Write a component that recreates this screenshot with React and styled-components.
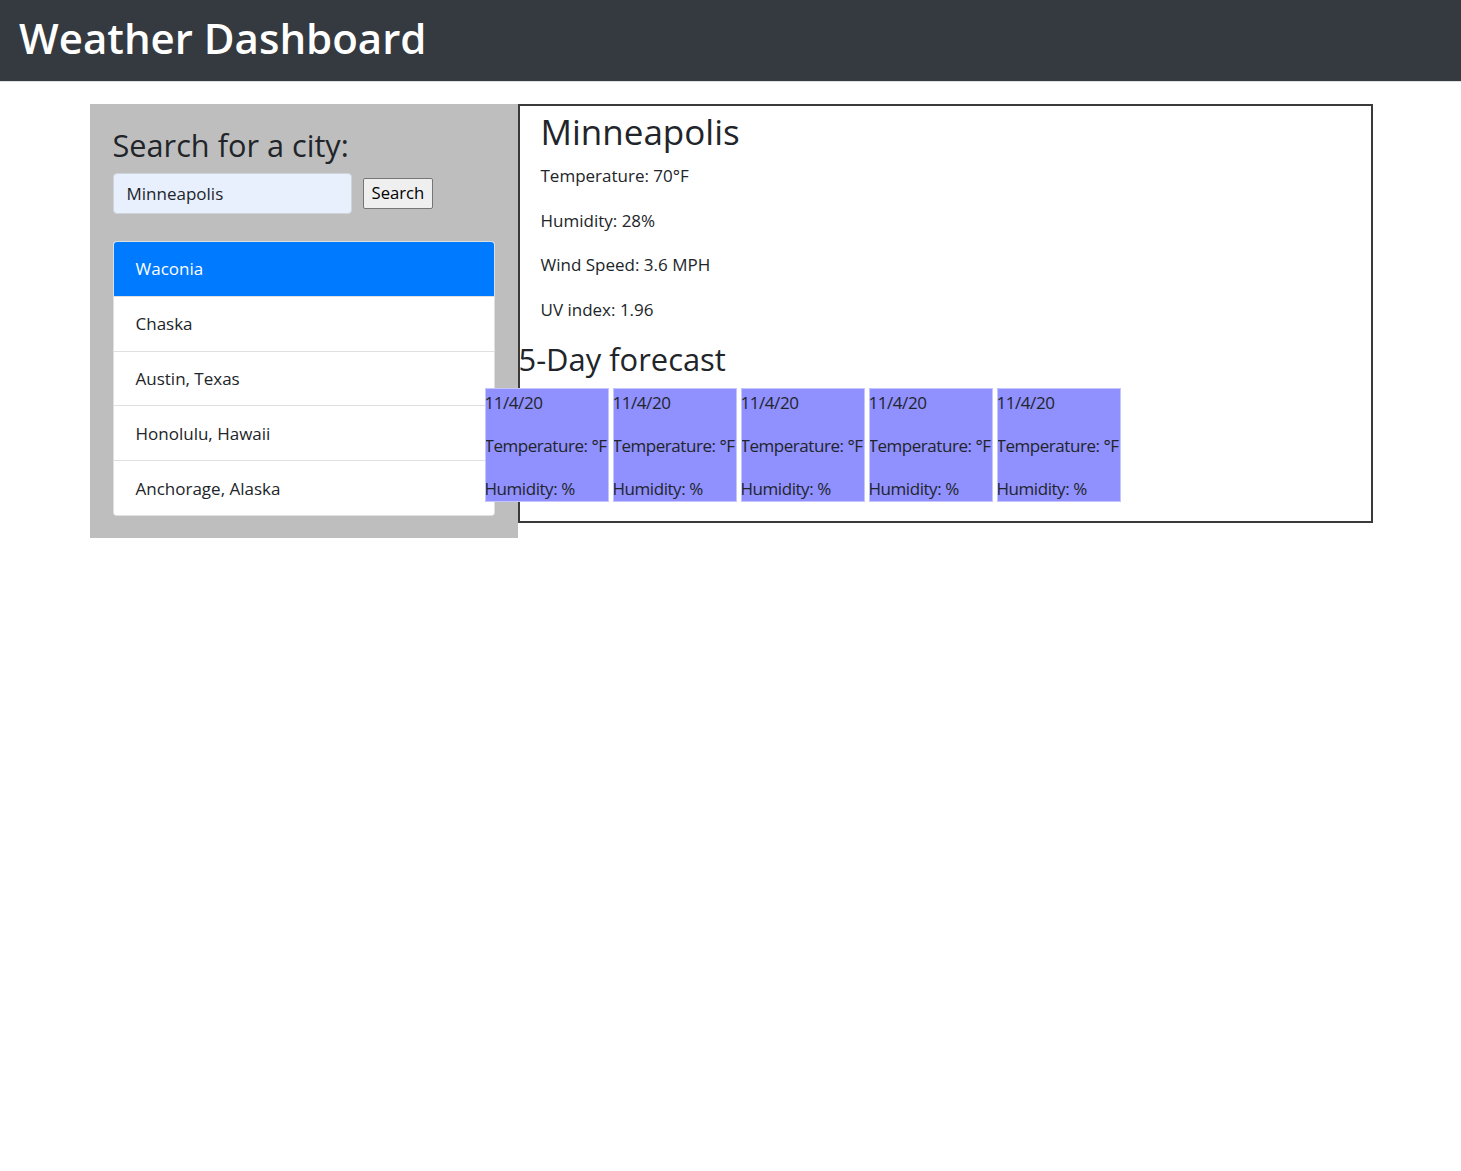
import React from "react";
import styled, { createGlobalStyle } from "styled-components";

const Global = createGlobalStyle`
  html, body { margin: 0; padding: 0; background: #fff; }
  body {
    font-family: "Segoe UI", "Open Sans", "Noto Sans", sans-serif;
    font-size: 17px;
    line-height: 1.5;
    color: #212529;
  }
  * { box-sizing: border-box; }
`;

const Header = styled.header`
  background: #343a40;
  padding: 11px 19px 17px;
  border-bottom: 1px solid #e0e0e0;
`;

const Title = styled.h1`
  margin: 0;
  color: #fff;
  font-size: 42px;
  font-weight: 600;
  line-height: 53px;
`;

const Main = styled.main`
  width: 1282px;
  margin: 22px auto 0;
  display: flex;
  align-items: flex-start;
`;

const Sidebar = styled.aside`
  width: 428px;
  flex: none;
  background: #bebebe;
  padding: 22px 22px 22px 23px;
`;

const SideTitle = styled.h3`
  margin: 0 0 9px;
  font-size: 30.7px;
  font-weight: 400;
  line-height: 38px;
`;

const SearchRow = styled.form`
  display: flex;
  align-items: center;
  gap: 11px;
  margin: 0;
`;

const CityInput = styled.input`
  width: 239px;
  height: 41px;
  padding: 6px 13px;
  font: inherit;
  font-size: 17px;
  color: #212529;
  background: #e8f0fe;
  border: 1px solid #ced4da;
  border-radius: 4px;
  outline: none;
`;

const SearchButton = styled.button`
  height: 31px;
  padding: 0 8px;
  font: inherit;
  font-size: 16.7px;
  line-height: 1;
  color: #000;
  background: #efefef;
  border: 1px solid #767676;
  border-radius: 2px;
`;

const CityList = styled.ul`
  list-style: none;
  margin: 27px 0 0;
  padding: 0;
  width: 382px;
  background: #fff;
  border: 1px solid rgba(0, 0, 0, 0.125);
  border-radius: 4px;
  overflow: hidden;
`;

const CityItem = styled.li`
  padding: 13.4px 22px;
  line-height: 27px;
  font-size: 17px;
  background: ${(p) => (p.$active ? "#007bff" : "#fff")};
  color: ${(p) => (p.$active ? "#fff" : "#212529")};
  & + & {
    border-top: 1px solid rgba(0, 0, 0, 0.125);
  }
`;

const Current = styled.section`
  width: 855px;
  flex: none;
  border: 2px solid #3a3a3a;
  background: #fff;
`;

const CurrentBody = styled.div`
  padding: 4px 21px 0;
`;

const CityName = styled.h2`
  margin: 0 0 9px;
  font-size: 35px;
  font-weight: 400;
  line-height: 43px;
`;

const Stat = styled.p`
  margin: 0 0 17.5px;
  line-height: 27px;
`;

const ForecastTitle = styled.h3`
  margin: 0 0 10px;
  font-size: 30.9px;
  font-weight: 400;
  line-height: 38px;
  position: relative;
  left: -1px;
`;

const ForecastRow = styled.div`
  display: flex;
  gap: 4px;
  margin: 0 0 19px -35px;
`;

const DayCard = styled.div`
  width: 124px;
  height: 114px;
  flex: none;
  background: #9090ff;
  border: 1px solid #c4c4ff;
  overflow: hidden;
  white-space: nowrap;
`;

const DayLine = styled.p`
  margin: 0 0 16px -1px;
  font-size: 17px;
  letter-spacing: -0.45px;
  line-height: 27px;
`;

const cities = ["Waconia", "Chaska", "Austin, Texas", "Honolulu, Hawaii", "Anchorage, Alaska"];

export default function App() {
  return (
    <>
      <Global />
      <Header>
        <Title>Weather Dashboard</Title>
      </Header>
      <Main>
        <Sidebar>
          <SideTitle>Search for a city:</SideTitle>
          <SearchRow onSubmit={(e) => e.preventDefault()}>
            <CityInput defaultValue="Minneapolis" />
            <SearchButton type="submit">Search</SearchButton>
          </SearchRow>
          <CityList>
            {cities.map((c, i) => (
              <CityItem key={c} $active={i === 0}>{c}</CityItem>
            ))}
          </CityList>
        </Sidebar>
        <Current>
          <CurrentBody>
            <CityName>Minneapolis</CityName>
            <Stat>Temperature: 70°F</Stat>
            <Stat>Humidity: 28%</Stat>
            <Stat>Wind Speed: 3.6 MPH</Stat>
            <Stat>UV index: 1.96</Stat>
          </CurrentBody>
          <ForecastTitle>5-Day forecast</ForecastTitle>
          <ForecastRow>
            {[0, 1, 2, 3, 4].map((i) => (
              <DayCard key={i}>
                <DayLine>11/4/20</DayLine>
                <DayLine>Temperature: °F</DayLine>
                <DayLine>Humidity: %</DayLine>
              </DayCard>
            ))}
          </ForecastRow>
        </Current>
      </Main>
    </>
  );
}
